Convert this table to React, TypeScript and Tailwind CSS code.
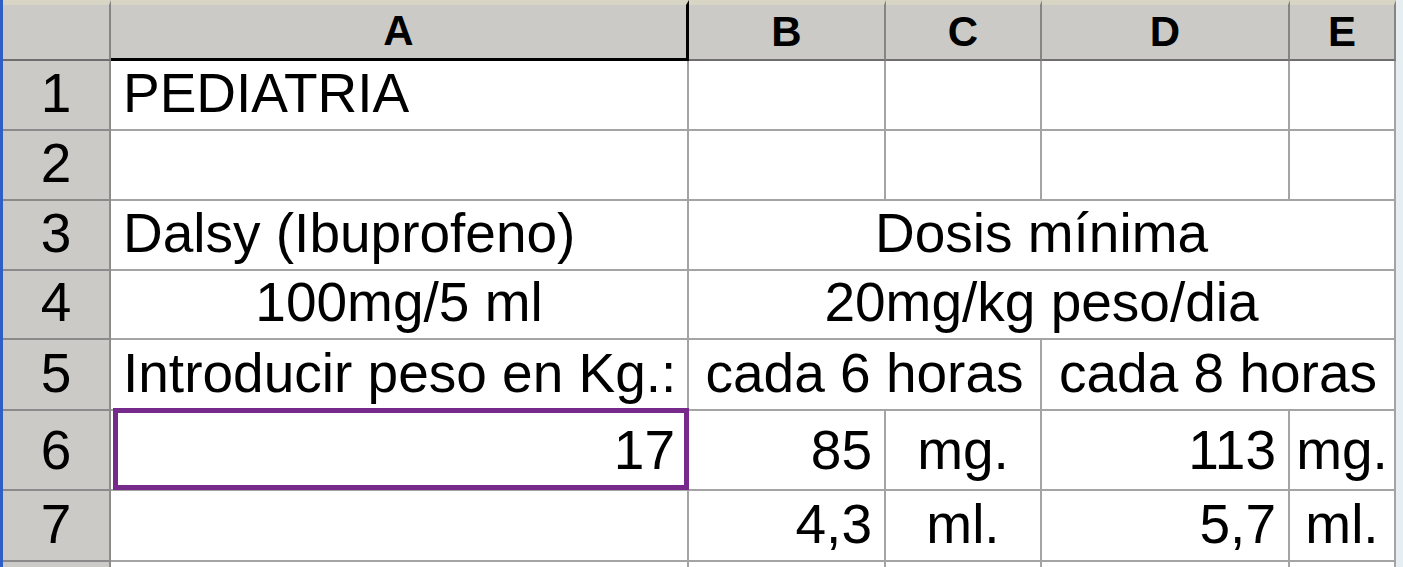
import React from 'react';

type Align = 'left' | 'center' | 'right';

interface CellProps {
  children?: React.ReactNode;
  align?: Align;
  span?: 1 | 2 | 4;
  tall?: boolean;
  selected?: boolean;
}

const alignClass: Record<Align, string> = {
  left: 'justify-start',
  center: 'justify-center',
  right: 'justify-end',
};

function Cell({ children, align = 'left', span = 1, tall, selected }: CellProps) {
  return (
    <div
      className={[
        'relative bg-white border-r-2 border-b-2 border-[#a4a4a4] flex items-end px-[12px] whitespace-nowrap text-[55px] leading-none text-black',
        tall ? 'pb-[11px]' : 'pb-[8px]',
        alignClass[align],
        span === 2 ? 'col-span-2' : '',
        span === 4 ? 'col-span-4' : '',
      ].join(' ')}
    >
      {children}
      {/* active cell frame */}
      {selected && (
        <div className="absolute -top-[3px] left-[2px] -right-[2px] -bottom-[1px] border-[5px] border-[#762a8c] pointer-events-none" />
      )}
    </div>
  );
}

function RowHead({ n, tall }: { n: number; tall?: boolean }) {
  return (
    <div
      className={[
        'bg-[#cbcac6] border-r-2 border-r-[#8c8c8c] border-b-2 border-b-[#8a8a8a] flex items-end justify-center text-[55px] leading-none text-black',
        tall ? 'pb-[11px]' : 'pb-[8px]',
      ].join(' ')}
    >
      {n}
    </div>
  );
}

function ColHead({ label, active }: { label: string; active?: boolean }) {
  return (
    <div
      className={[
        'bg-[#cbcac6] border-t-[5px] border-t-[#d8d5c4] flex items-end justify-center pb-[6px] text-[42px] font-bold leading-none text-black',
        active
          ? 'border-r-[3px] border-r-black border-b-[3px] border-b-black'
          : 'border-r-2 border-r-[#858585] border-b-2 border-b-[#6e6e6e]',
      ].join(' ')}
    >
      {label}
    </div>
  );
}

export default function App() {
  return (
    <div
      className="h-[567px] w-[1403px] overflow-hidden bg-white flex"
      style={{ fontFamily: '"Liberation Sans", Arial, sans-serif' }}
    >
      <div className="w-[3px] bg-[#2f5fc4] shrink-0" />
      <div className="grid grid-cols-[108px_578px_197px_156px_248px_106px] grid-rows-[61px_70px_70px_70px_69px_71px_80px_71px_30px] shrink-0">
        {/* header row */}
        <div className="bg-[#cbcac6] border-t-[5px] border-t-[#d8d5c4] border-r-2 border-r-[#858585] border-b-2 border-b-[#6e6e6e]" />
        <ColHead label="A" active />
        <ColHead label="B" />
        <ColHead label="C" />
        <ColHead label="D" />
        <ColHead label="E" />

        {/* 1 */}
        <RowHead n={1} />
        <Cell>PEDIATRIA</Cell>
        <Cell />
        <Cell />
        <Cell />
        <Cell />

        {/* 2 */}
        <RowHead n={2} />
        <Cell />
        <Cell />
        <Cell />
        <Cell />
        <Cell />

        {/* 3 */}
        <RowHead n={3} />
        <Cell>Dalsy (Ibuprofeno)</Cell>
        <Cell align="center" span={4}>
          Dosis mínima
        </Cell>

        {/* 4 */}
        <RowHead n={4} />
        <Cell align="center">100mg/5 ml</Cell>
        <Cell align="center" span={4}>
          20mg/kg peso/dia
        </Cell>

        {/* 5 */}
        <RowHead n={5} />
        <Cell>Introducir peso en Kg.:</Cell>
        <Cell align="center" span={2}>
          cada 6 horas
        </Cell>
        <Cell align="center" span={2}>
          cada 8 horas
        </Cell>

        {/* 6 */}
        <RowHead n={6} tall />
        <Cell align="right" tall selected>
          17
        </Cell>
        <Cell align="right" tall>
          85
        </Cell>
        <Cell align="center" tall>
          mg.
        </Cell>
        <Cell align="right" tall>
          113
        </Cell>
        <Cell align="center" tall>
          mg.
        </Cell>

        {/* 7 */}
        <RowHead n={7} />
        <Cell />
        <Cell align="right">4,3</Cell>
        <Cell align="center">ml.</Cell>
        <Cell align="right">5,7</Cell>
        <Cell align="center">ml.</Cell>

        {/* 8 (cut off) */}
        <div className="bg-[#cbcac6] border-r-2 border-r-[#8c8c8c]" />
        <Cell />
        <Cell />
        <Cell />
        <Cell />
        <Cell />
      </div>
      <div className="flex-1 bg-[#e6eef2]" />
    </div>
  );
}
